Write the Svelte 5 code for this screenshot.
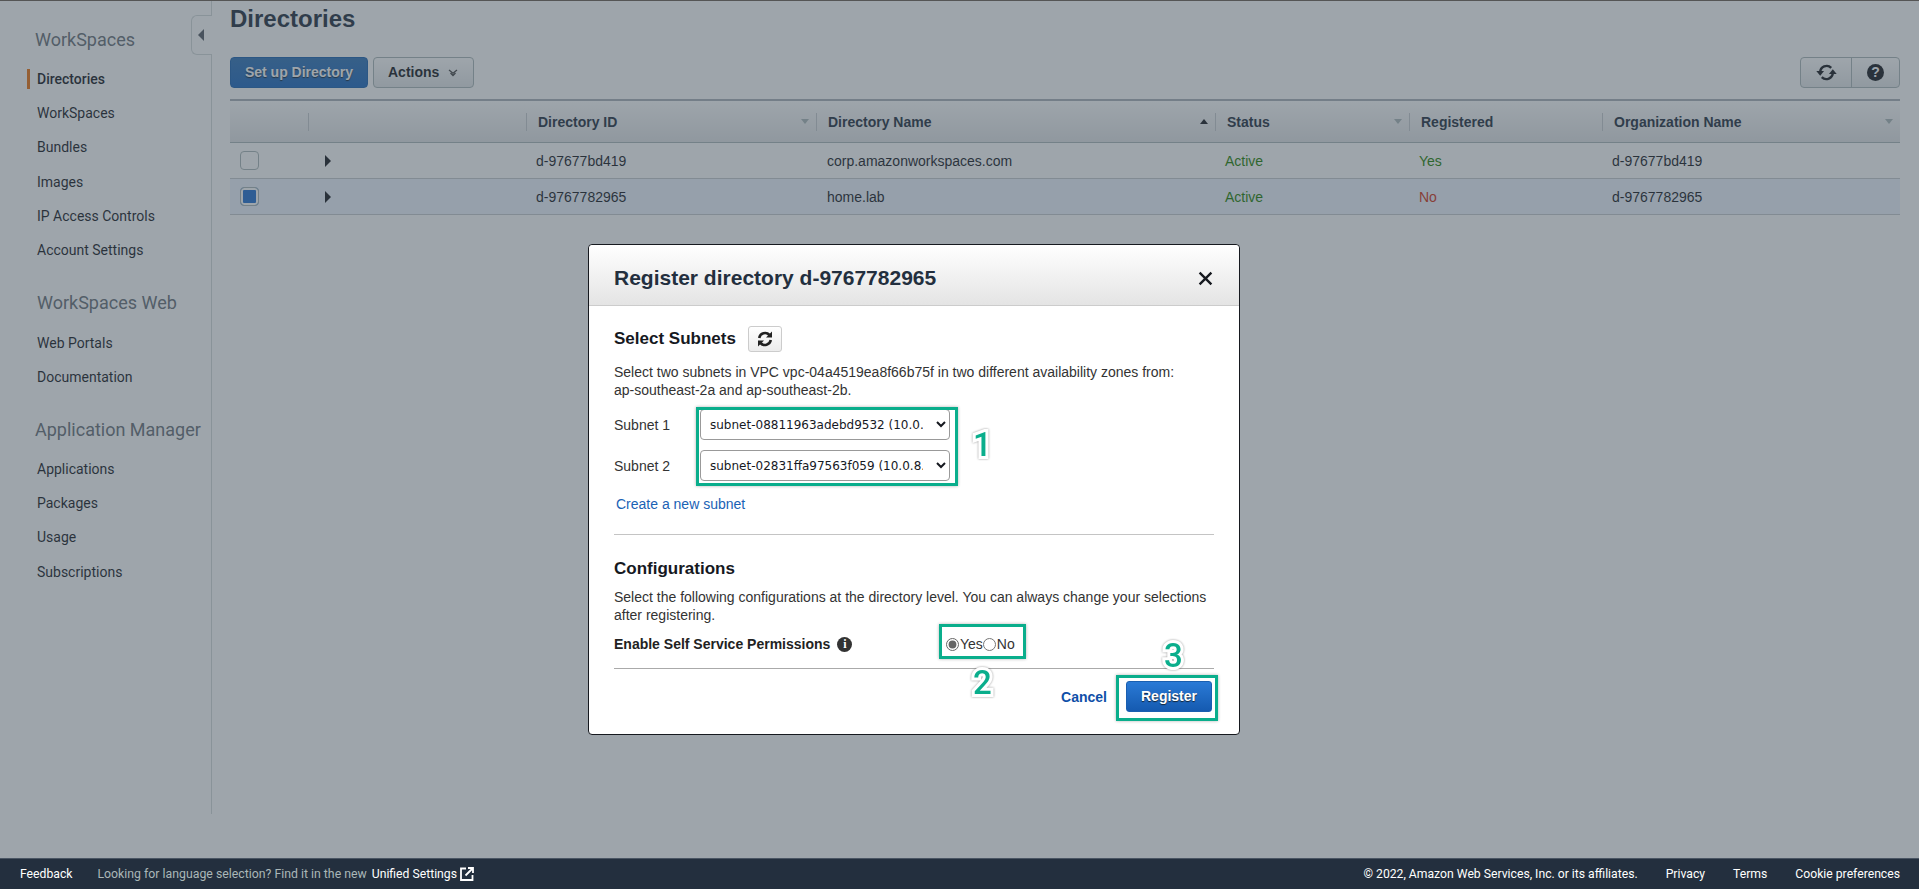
<script lang="ts">
  const navGroups = [
    { title: 'WorkSpaces', items: ['Directories', 'WorkSpaces', 'Bundles', 'Images', 'IP Access Controls', 'Account Settings'] },
    { title: 'WorkSpaces Web', items: ['Web Portals', 'Documentation'] },
    { title: 'Application Manager', items: ['Applications', 'Packages', 'Usage', 'Subscriptions'] }
  ];

  const columns = [
    { label: 'Directory ID', sort: 'down' },
    { label: 'Directory Name', sort: 'up' },
    { label: 'Status', sort: 'down' },
    { label: 'Registered', sort: '' },
    { label: 'Organization Name', sort: 'down' }
  ];

  const rows = [
    { id: 'd-97677bd419', name: 'corp.amazonworkspaces.com', status: 'Active', registered: 'Yes', selected: false },
    { id: 'd-9767782965', name: 'home.lab', status: 'Active', registered: 'No', selected: true }
  ];
</script>

<div class="page">
  <div class="shell">
    <aside class="sidebar">
      <button class="collapse" aria-label="Collapse"><span class="tri-left"></span></button>
      {#each navGroups as group}
        <h3>{group.title}</h3>
        <ul>
          {#each group.items as item}
            <li class:current={item === 'Directories'}>{item}</li>
          {/each}
        </ul>
      {/each}
    </aside>

    <main>
      <h1>Directories</h1>
      <div class="toolbar">
        <button class="btn primary">Set up Directory</button>
        <button class="btn">Actions
          <svg width="10" height="8" viewBox="0 0 10 8"><path d="M1 1l4 3.200L9 1M2.500 4l2.500 2.500L7.500 4" fill="none" stroke="#444" stroke-width="1.300"/></svg>
        </button>
        <div class="icon-group">
          <button class="icon-btn" aria-label="Refresh">
            <svg width="21" height="21" viewBox="0 0 20 20" fill="none" stroke="#16191f" stroke-width="2.300">
              <path d="M4 10a6.200 6.200 0 0 1 10.500-4.500"/>
              <path d="M16 10a6.200 6.200 0 0 1-10.500 4.500"/>
              <path d="M0.300 8.500h7.400L4 13z" fill="#16191f" stroke="none"/>
              <path d="M12.300 11.500h7.400L16 7z" fill="#16191f" stroke="none"/>
            </svg>
          </button>
          <button class="icon-btn" aria-label="Help">
            <span class="help">?</span>
          </button>
        </div>
      </div>

      <table>
        <colgroup>
          <col style="width:78px" /><col style="width:218px" /><col style="width:290px" /><col style="width:399px" /><col style="width:194px" /><col style="width:193px" /><col style="width:298px" />
        </colgroup>
        <thead>
          <tr>
            <th></th>
            <th class="sep"></th>
            {#each columns as col}
              <th class="sep">
                {col.label}
                {#if col.sort}<span class="sort {col.sort}"></span>{/if}
              </th>
            {/each}
          </tr>
        </thead>
        <tbody>
          {#each rows as row}
            <tr class:selected={row.selected}>
              <td><span class="check" class:on={row.selected}></span></td>
              <td><span class="tri-right"></span></td>
              <td>{row.id}</td>
              <td>{row.name}</td>
              <td class="ok">{row.status}</td>
              <td class={row.registered === 'Yes' ? 'ok' : 'bad'}>{row.registered}</td>
              <td>{row.id}</td>
            </tr>
          {/each}
        </tbody>
      </table>
    </main>
  </div>

  <div class="backdrop"></div>

  <div class="modal">
    <header>
      <h2>Register directory d-9767782965</h2>
      <svg class="close" width="15" height="15" viewBox="0 0 14 14"><path d="M1.500 1.500l11 11M12.500 1.500l-11 11" stroke="#16191f" stroke-width="2.200"/></svg>
    </header>
    <div class="body">
      <div class="subnets-head">
        <h4>Select Subnets</h4>
        <button class="small-refresh" aria-label="Refresh subnets">
          <svg width="18" height="18" viewBox="0 0 18 18" fill="none" stroke="#222" stroke-width="2.600">
            <path d="M3.200 8a6 6 0 0 1 10.300-3"/>
            <path d="M14.800 10a6 6 0 0 1-10.300 3"/>
            <path d="M16 1.500v6h-6z" fill="#222" stroke="none"/>
            <path d="M2 16.500v-6h6z" fill="#222" stroke="none"/>
          </svg>
        </button>
      </div>
      <p class="para">Select two subnets in VPC vpc-04a4519ea8f66b75f in two different availability zones from:<br />ap-southeast-2a and ap-southeast-2b.</p>
      <div class="field">
        <label for="s1">Subnet 1</label>
        <select id="s1"><option>subnet-08811963adebd9532 (10.0.0.0/24)</option></select>
      </div>
      <div class="field">
        <label for="s2">Subnet 2</label>
        <select id="s2"><option>subnet-02831ffa97563f059 (10.0.8.0/24)</option></select>
      </div>
      <a class="create" href="#subnet">Create a new subnet</a>
      <hr />
      <h4 class="config">Configurations</h4>
      <p class="para">Select the following configurations at the directory level. You can always change your selections after registering.</p>
      <div class="perm">
        <span class="perm-label">Enable Self Service Permissions</span>
        <span class="info">i</span>
        <span class="radios">
          <input type="radio" name="ssp" checked /><span>Yes</span><input type="radio" name="ssp" /><span>No</span>
        </span>
      </div>
    </div>
    <footer>
      <a class="cancel" href="#cancel">Cancel</a>
      <button class="register">Register</button>
    </footer>

    <div class="mark m1"></div>
    <div class="mark m2"></div>
    <div class="mark m3"></div>
    <span class="num n1">1</span>
    <span class="num n2">2</span>
    <span class="num n3">3</span>
  </div>

  <footer class="console-footer">
    <span class="f-white">Feedback</span>
    <span class="f-lang">Looking for language selection? Find it in the new</span>
    <span class="f-white f-unified">Unified Settings</span>
    <svg class="f-ext" width="14" height="14" viewBox="0 0 14 14" fill="none" stroke="#fff" stroke-width="1.800"><path d="M6 1.500H1v11.500h11.500V8"/><path d="M5.500 8.500L12.500 1.500M8 1h5v5"/></svg>
    <span class="f-right">
      <span class="f-white">© 2022, Amazon Web Services, Inc. or its affiliates.</span>
      <span class="f-white">Privacy</span>
      <span class="f-white">Terms</span>
      <span class="f-white">Cookie preferences</span>
    </span>
  </footer>
</div>

<style>
  :global(body) {
    margin: 0;
    background: #fff;
  }
  * {
    box-sizing: border-box;
  }
  .page {
    position: relative;
    width: 1919px;
    height: 889px;
    overflow: hidden;
    display: flex;
    flex-direction: column;
    font-family: "Liberation Sans", Arial, sans-serif;
    color: #16191f;
    border-top: 1px solid #555;
  }
  .shell {
    flex: 1;
    display: flex;
    align-items: flex-start;
  }
  .sidebar {
    position: relative;
    width: 212px;
    height: 813px;
    flex: none;
    padding: 27px 0 0 35px;
    border-right: 1px solid #d5dbdb;
    font-family: Roboto, sans-serif;
  }
  .sidebar h3 {
    margin: 0 0 10px;
    font-size: 18px;
    line-height: 24px;
    font-weight: 400;
    color: #687078;
  }
  .sidebar h3:nth-of-type(2) {
    padding-left: 2px;
    margin-bottom: 11px;
  }
  .sidebar ul {
    list-style: none;
    margin: 0 0 24px;
    padding: 0 0 0 2px;
  }
  .sidebar ul:nth-of-type(2) {
    margin-bottom: 23.5px;
  }
  .sidebar li {
    position: relative;
    height: 34.2px;
    line-height: 34px;
    font-size: 14px;
    color: #16191f;
  }
  .sidebar li.current {
    font-weight: 500;
  }
  .sidebar li.current::before {
    content: '';
    position: absolute;
    left: -10px;
    top: 7px;
    width: 3px;
    height: 20px;
    background: #ec7211;
  }
  .collapse {
    position: absolute;
    right: -1px;
    top: 14px;
    width: 21px;
    height: 40px;
    padding: 0;
    background: #fff;
    border: 1px solid #d5dbdb;
    border-right: 0;
    border-radius: 6px 0 0 6px;
  }
  .tri-left {
    display: block;
    width: 0;
    height: 0;
    margin-left: 6px;
    border: 6px solid transparent;
    border-left: 0;
    border-right: 6px solid #545b64;
  }
  main {
    flex: 1;
    min-width: 0;
    padding: 3px 19px 0 18px;
  }
  h1 {
    margin: 0;
    font-size: 24px;
    line-height: 30px;
    font-weight: 700;
    color: #232f3e;
  }
  .toolbar {
    display: flex;
    gap: 5px;
    margin-top: 23px;
    height: 31px;
  }
  .btn {
    height: 31px;
    padding: 0 15px 2px 14px;
    font: 700 14px "Liberation Sans", Arial, sans-serif;
    color: #16191f;
    background: linear-gradient(#fff, #e4e7e9);
    border: 1px solid #aab7b8;
    border-radius: 4px;
  }
  .btn svg {
    margin-left: 5px;
  }
  .btn.primary {
    width: 138px;
    padding: 0 0 2px;
    color: #fff;
    text-shadow: 0 1px 1px #123;
    background: linear-gradient(#2f73b8, #1c68c0);
    border-color: #1a62b0;
  }
  .icon-group {
    margin-left: auto;
    display: flex;
    width: 100px;
    border: 1px solid #aab7b8;
    border-radius: 4px;
    background: linear-gradient(#fff, #e4e7e9);
  }
  .icon-btn {
    flex: 1;
    padding: 0;
    background: none;
    border: 0;
    display: flex;
    align-items: center;
    justify-content: center;
  }
  .icon-btn:first-child {
    flex: none;
    width: 51px;
    border-right: 1px solid #aab7b8;
  }
  .help {
    width: 17px;
    height: 17px;
    border-radius: 50%;
    background: #16191f;
    color: #fff;
    font-size: 14px;
    font-weight: 700;
    line-height: 17px;
    text-align: center;
  }
  table {
    margin-top: 11px;
    width: 1670px;
    table-layout: fixed;
    border-collapse: collapse;
    border-top: 2px solid #aab1b8;
    font-size: 14px;
  }
  thead tr {
    height: 42px;
    background: linear-gradient(#fff, #e2e4e6);
  }
  thead {
    border-bottom: 1px solid #aab7b8;
    border-top: 1px solid #fff;
  }
  th {
    position: relative;
    padding: 2px 0 0 12px;
    text-align: left;
    font-weight: 700;
    color: #232f3e;
  }
  th.sep::before {
    content: '';
    position: absolute;
    left: 0;
    top: 12px;
    height: 18px;
    border-left: 1px solid #c6cbcf;
  }
  .sort {
    position: absolute;
    right: 7px;
    top: 18px;
    width: 0;
    height: 0;
    border-left: 4px solid transparent;
    border-right: 4px solid transparent;
  }
  .sort.down {
    border-top: 5px solid #aab7b8;
  }
  .sort.up {
    border-bottom: 5px solid #16191f;
  }
  tbody tr {
    height: 36px;
    border-bottom: 1px solid #c6cbcf;
  }
  tbody tr.selected {
    background: #eef4fe;
  }
  td {
    padding: 1px 0 0 10px;
    color: #16191f;
  }
  td:nth-child(2) {
    padding-left: 17px;
  }
  td:nth-child(4) {
    padding-left: 11px;
  }
  td.ok {
    color: #1d8102;
  }
  td.bad {
    color: #d13212;
  }
  .check {
    display: block;
    width: 19px;
    height: 19px;
    background: #fff;
    border: 1px solid #aab7b8;
    border-radius: 4px;
  }
  .check.on {
    background: #1f6fd0;
    box-shadow: inset 0 0 0 2px #fff;
  }
  .tri-right {
    display: block;
    width: 0;
    height: 0;
    border: 6px solid transparent;
    border-right: 0;
    border-left: 6px solid #16191f;
  }
  .backdrop {
    position: absolute;
    inset: 0;
    background: rgba(61, 76, 88, 0.5);
  }
  .modal {
    position: absolute;
    left: 588px;
    top: 243px;
    width: 652px;
    height: 491px;
    display: flex;
    flex-direction: column;
    background: #fff;
    border: 1px solid #16191f;
    border-radius: 4px;
  }
  .modal header {
    height: 61px;
    flex: none;
    padding: 6px 26px 0 25px;
    display: flex;
    align-items: center;
    justify-content: space-between;
    background: linear-gradient(#fff, #e4e4e4);
    border-bottom: 1px solid #ccc;
    border-radius: 4px 4px 0 0;
  }
  h2 {
    margin: 0;
    font-size: 21px;
    font-weight: 700;
    color: #232f3e;
  }
  .body {
    flex: 1;
    padding: 20px 25px 0;
  }
  .subnets-head {
    display: flex;
    align-items: center;
    gap: 12px;
    height: 26px;
  }
  h4 {
    margin: 0;
    font-size: 17px;
    font-weight: 700;
    color: #16191f;
  }
  .small-refresh {
    width: 34px;
    height: 26px;
    padding: 0;
    display: flex;
    align-items: center;
    justify-content: center;
    background: linear-gradient(#fff, #ececec);
    border: 1px solid #ccc;
    border-radius: 3px;
  }
  .para {
    margin: 11px 0 0;
    font-size: 14px;
    line-height: 18px;
    color: #333;
  }
  .field {
    display: flex;
    align-items: center;
    height: 31px;
    margin-top: 10px;
    font-size: 14px;
    color: #333;
  }
  label {
    width: 86px;
    flex: none;
  }
  select {
    width: 250px;
    height: 31px;
    padding: 0 10px 0 5px;
    font: 12px "DejaVu Sans", sans-serif;
    color: #16191f;
    background: #fff;
    border: 1px solid #999;
    border-radius: 4px;
  }
  .create {
    display: block;
    margin-top: 15px;
    margin-left: 2px;
    font-size: 14px;
    color: #1a62b5;
    text-decoration: none;
  }
  hr {
    margin: 22px 0 0;
    border: 0;
    border-top: 1px solid #c4c4c4;
  }
  .config {
    margin-top: 24px;
  }
  .config + .para {
    margin-top: 9px;
  }
  .perm {
    position: relative;
    display: flex;
    align-items: center;
    margin-top: 11px;
    height: 18px;
  }
  .perm-label {
    font-size: 14px;
    font-weight: 700;
    color: #222;
  }
  .info {
    width: 15px;
    height: 15px;
    margin-left: 7px;
    border-radius: 50%;
    background: #333;
    color: #fff;
    font: 700 12px/15px "Liberation Serif", serif;
    text-align: center;
  }
  .radios {
    position: absolute;
    left: 332px;
    top: 1px;
    display: flex;
    align-items: center;
    font-size: 14px;
    color: #333;
  }
  .radios input {
    width: 13px;
    height: 13px;
    margin: 0 1px 0 0;
    accent-color: #666;
  }
  .modal > footer {
    flex: none;
    height: 66px;
    margin: 0 25px;
    padding-top: 12px;
    display: flex;
    justify-content: flex-end;
    align-items: flex-start;
    gap: 19px;
    border-top: 1px solid #aaa;
  }
  .cancel {
    margin-top: 8px;
    font-size: 14px;
    font-weight: 700;
    color: #0f4fa8;
    text-decoration: none;
  }
  .register {
    width: 86px;
    height: 31px;
    margin-right: 2px;
    padding: 0 0 2px;
    font: 700 14px "Liberation Sans", Arial, sans-serif;
    color: #fff;
    text-shadow: 0 1px 1px #123;
    background: linear-gradient(#2a7ad6, #155ab0);
    border: 1px solid #1a5fb0;
    border-radius: 3px;
  }
  .mark {
    position: absolute;
    border: 3px solid #0aae8c;
    box-shadow: 0 0 3px rgba(0, 0, 0, 0.3);
  }
  .m1 {
    left: 107px;
    top: 162px;
    width: 262px;
    height: 79px;
  }
  .m2 {
    left: 350px;
    top: 379px;
    width: 87px;
    height: 35px;
  }
  .m3 {
    left: 527px;
    top: 430px;
    width: 102px;
    height: 46px;
  }
  .num {
    position: absolute;
    font: 500 33px/34px Roboto, sans-serif;
    color: #0aae8c;
    -webkit-text-stroke: 6px #fff;
    paint-order: stroke fill;
    filter: drop-shadow(0 0 1px rgba(0, 0, 0, 0.4));
  }
  .n1 {
    left: 384px;
    top: 183px;
  }
  .n2 {
    left: 384px;
    top: 421px;
  }
  .n3 {
    left: 575px;
    top: 394px;
  }
  .console-footer {
    position: relative;
    flex: none;
    height: 31px;
    padding: 0 19px 0 20px;
    display: flex;
    align-items: center;
    font-family: Roboto, sans-serif;
    font-size: 12.2px;
    background: #232f3e;
    border-top: 1px solid #4a5563;
  }
  .f-white {
    color: #fff;
  }
  .f-lang {
    margin-left: 25px;
    font-size: 12.3px;
    color: #aab7b8;
  }
  .f-unified {
    margin-left: 5px;
  }
  .f-ext {
    margin-left: 3px;
  }
  .f-right {
    margin-left: auto;
    display: flex;
    gap: 28px;
  }
</style>
